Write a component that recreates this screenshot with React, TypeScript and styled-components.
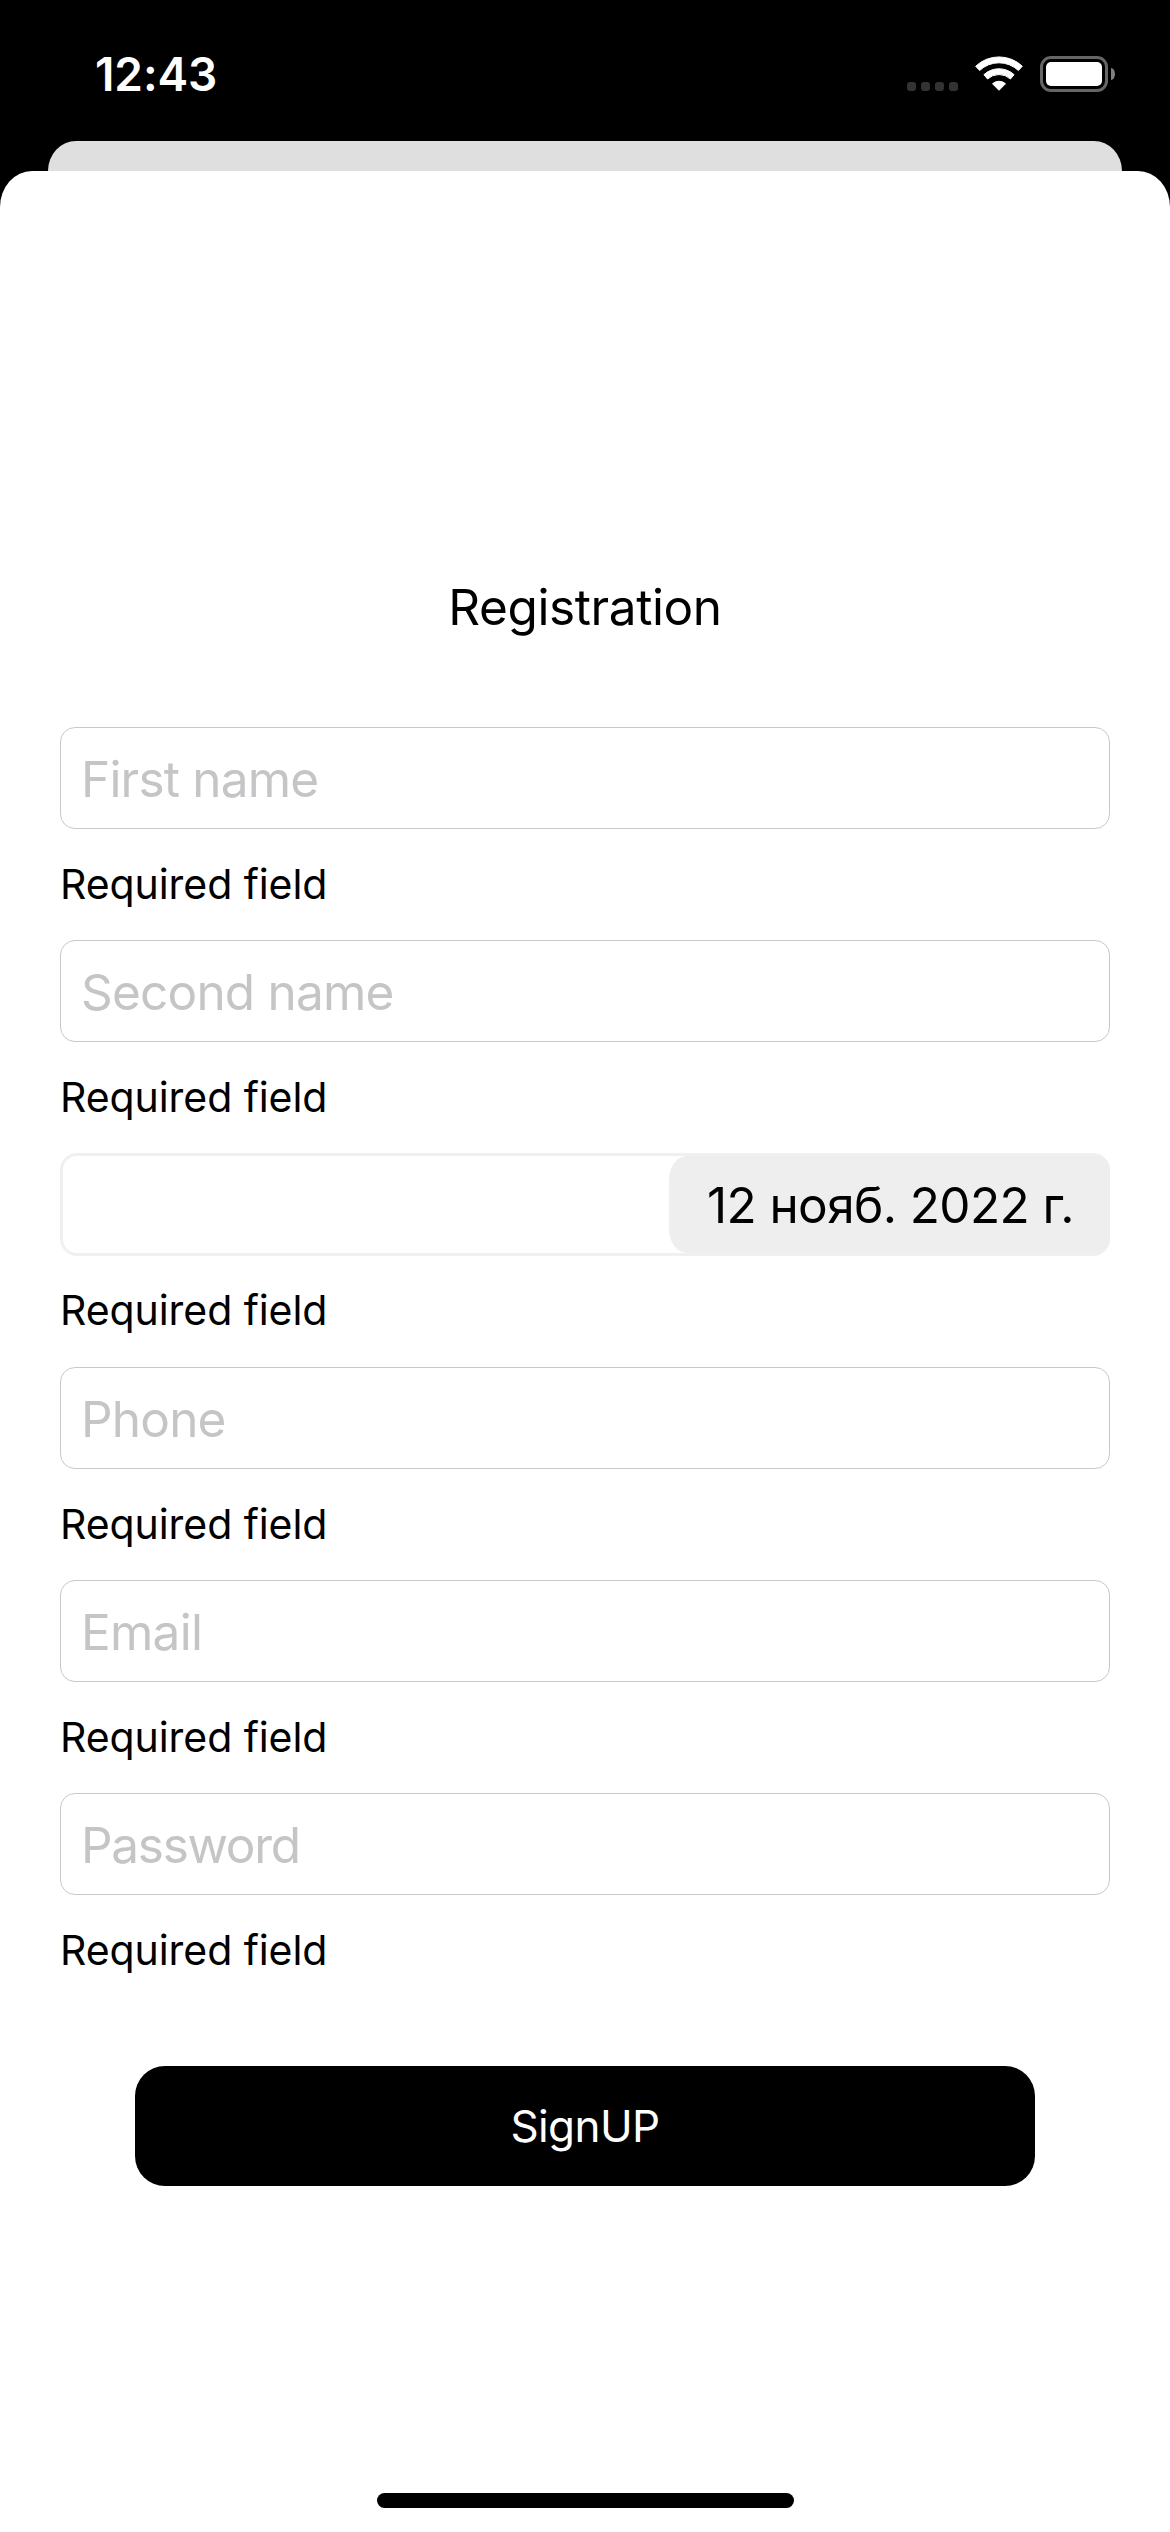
import React from "react";
import styled, { createGlobalStyle } from "styled-components";

const GlobalStyle = createGlobalStyle`
  *, *::before, *::after { box-sizing: border-box; }
  html, body { margin: 0; padding: 0; background: #000; }
  body { font-family: Inter, "Noto Sans", sans-serif; color: #000; }
`;

const Screen = styled.div`
  width: 1170px;
  height: 2532px;
  overflow: hidden;
  display: flex;
  flex-direction: column;
  background: #000;
`;

const StatusBar = styled.header`
  flex: none;
  height: 141px;
  padding: 44px 55px 0 95px;
  display: flex;
  justify-content: space-between;
  align-items: flex-start;
`;

const Clock = styled.time`
  color: #fff;
  font-size: 46px;
  line-height: 60px;
  font-weight: 600;
  letter-spacing: -0.1px;
`;

const StatusIcons = styled.div`
  display: flex;
  align-items: flex-end;
  height: 48px;
`;

const SignalDots = styled.div`
  display: flex;
  gap: 5px;
  margin: 0 17px 1px 0;
`;

const Dot = styled.i`
  width: 9px;
  height: 9px;
  border-radius: 3px;
  background: #333;
`;

const WifiIcon = styled.svg`
  display: block;
  width: 48px;
  height: 37px;
  margin-right: 17px;
`;

const Battery = styled.div`
  display: flex;
  align-items: center;
  gap: 3px;
`;

const BatteryCase = styled.div`
  width: 68px;
  height: 36px;
  padding: 3px;
  border: 3px solid #666;
  border-radius: 11px;
`;

const BatteryLevel = styled.div`
  height: 100%;
  border-radius: 5px;
  background: #fff;
`;

const BatteryCap = styled.div`
  width: 4px;
  height: 12px;
  border-radius: 0 4px 4px 0 / 0 6px 6px 0;
  background: #808080;
`;

const SheetBehind = styled.div`
  flex: none;
  height: 30px;
  margin: 0 48px;
  border-radius: 28px 28px 0 0 / 30px 30px 0 0;
  background: #dfdfdf;
`;

const Sheet = styled.main`
  flex: 1;
  display: flex;
  flex-direction: column;
  align-items: center;
  padding: 406px 60px 24px;
  border-radius: 32px 32px 0 0 / 36px 36px 0 0;
  background: #fff;
`;

const Title = styled.h1`
  margin: 0 0 90px;
  font-size: 49.5px;
  line-height: 60px;
  font-weight: 400;
  letter-spacing: -0.4px;
`;

const Form = styled.form`
  width: 100%;
  display: flex;
  flex-direction: column;
  align-items: center;
`;

const Field = styled.div`
  width: 100%;
  height: 213.2px;
  display: flex;
  flex-direction: column;
  gap: 30px;
`;

const TextBox = styled.div`
  height: 102px;
  padding: 2px 20px 0;
  display: flex;
  align-items: center;
  border: 1px solid #c8c8ca;
  border-radius: 15px;
`;

const Placeholder = styled.span<{ $spacing: number }>`
  color: #c5c5c7;
  font-size: 49.5px;
  line-height: 60px;
  letter-spacing: ${(p) => p.$spacing}px;
  white-space: pre;
`;

const DateBox = styled.div`
  height: 103px;
  margin-bottom: -1px;
  display: flex;
  justify-content: flex-end;
  border: 3px solid #f0f0f0;
  border-radius: 17px;
`;

const DateChip = styled.div`
  width: 441px;
  margin-right: -3px;
  padding-left: 38px;
  display: flex;
  align-items: center;
  border-radius: 18px 14px 14px 18px / 24px 14px 14px 24px;
  background: #eeeeef;
  font-size: 49.5px;
  line-height: 60px;
  letter-spacing: -0.6px;
  white-space: pre;
`;

const Hint = styled.div`
  font-size: 41px;
  line-height: 50px;
  letter-spacing: -0.07px;
`;

const SubmitButton = styled.button`
  width: 900px;
  height: 120px;
  margin-top: 60px;
  padding: 0;
  border: 0;
  border-radius: 30px;
  background: #000;
  color: #fff;
  font-family: inherit;
  font-size: 44px;
  letter-spacing: -0.6px;
`;

const HomeIndicator = styled.div`
  width: 417px;
  height: 15px;
  margin-top: auto;
  border-radius: 8px;
  background: #000;
`;

type FieldSpec = { label: string; spacing?: number; date?: boolean };

const fields: FieldSpec[] = [
  { label: "First name", spacing: -0.8 },
  { label: "Second name", spacing: -0.8 },
  { label: "12 нояб. 2022 г.", date: true },
  { label: "Phone", spacing: -0.8 },
  { label: "Email", spacing: -0.75 },
  { label: "Password", spacing: -1.3 },
];

function Wifi() {
  return (
    <WifiIcon viewBox="0 0 48 37" fill="#fff" stroke="#fff" strokeWidth="1" strokeLinejoin="round">
      <path d="M.7 11.2 A33.9 33.9 0 0 1 47.3 11.2 L43.4 15.5 A28.3 28.3 0 0 0 4.6 15.5 Z" />
      <path d="M8.9 19.7 A22.2 22.2 0 0 1 39.1 19.7 L35.4 24 A16.8 16.8 0 0 0 12.6 24 Z" />
      <path d="M17.5 28.7 A9.9 9.9 0 0 1 30.5 28.7 L24 35.3 Z" />
    </WifiIcon>
  );
}

export default function App() {
  return (
    <>
      <GlobalStyle />
      <Screen>
        <StatusBar>
          <Clock>12:43</Clock>
          <StatusIcons>
            <SignalDots>
              <Dot />
              <Dot />
              <Dot />
              <Dot />
            </SignalDots>
            <Wifi />
            <Battery>
              <BatteryCase>
                <BatteryLevel />
              </BatteryCase>
              <BatteryCap />
            </Battery>
          </StatusIcons>
        </StatusBar>
        <SheetBehind />
        <Sheet>
          <Title>Registration</Title>
          <Form onSubmit={(e) => e.preventDefault()}>
            {fields.map((f) => (
              <Field key={f.label}>
                {f.date ? (
                  <DateBox>
                    <DateChip>{f.label}</DateChip>
                  </DateBox>
                ) : (
                  <TextBox>
                    <Placeholder $spacing={f.spacing ?? 0}>{f.label}</Placeholder>
                  </TextBox>
                )}
                <Hint>Required field</Hint>
              </Field>
            ))}
            <SubmitButton type="submit">SignUP</SubmitButton>
          </Form>
          <HomeIndicator />
        </Sheet>
      </Screen>
    </>
  );
}
